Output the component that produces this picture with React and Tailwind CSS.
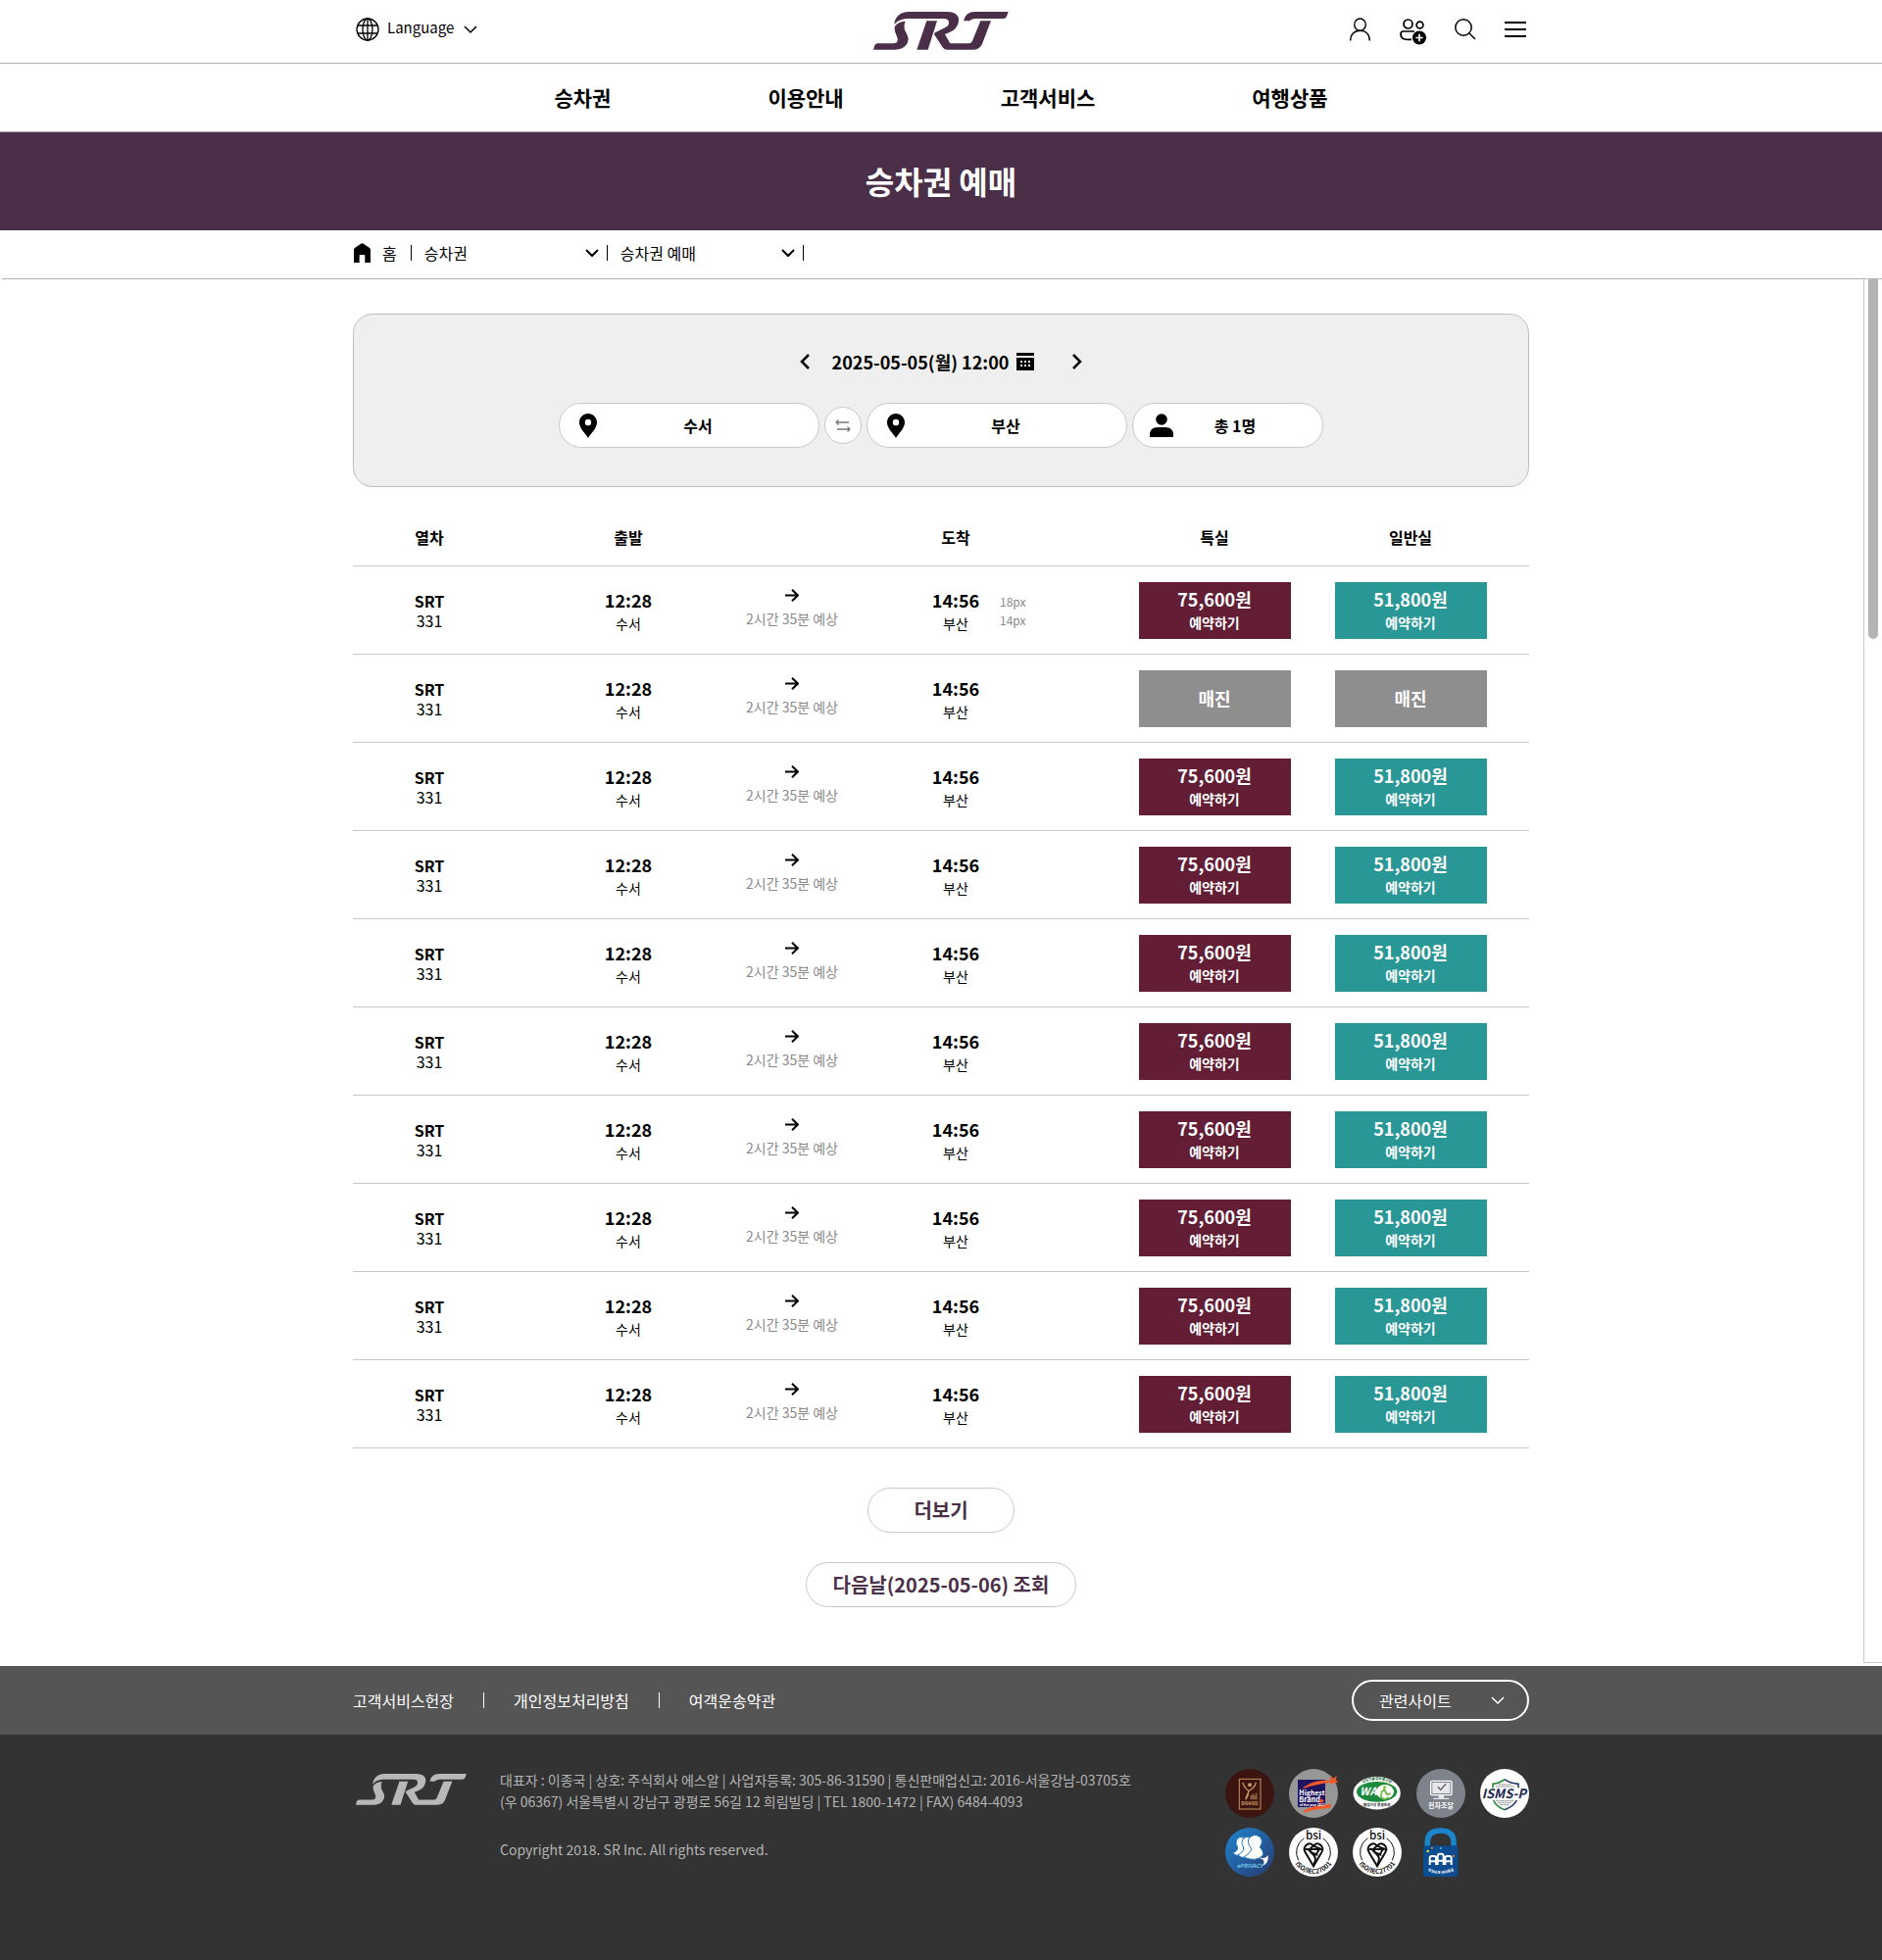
import React from "react";

const NAV = ["승차권", "이용안내", "고객서비스", "여행상품"];

const TRAINS = Array.from({ length: 10 }, (_, i) => ({
  id: i,
  number: "331",
  soldOut: i === 1,
  note: i === 0,
}));

function SrtLogo({ className }) {
  return (
    <svg viewBox="33 36 414 117" className={className} fill="currentColor" role="img" aria-label="SRT">
      <path d="M97 76C97 54 114 36 142 36H258C286 36 299 50 293 70C289 86 278 95 266 99L252 105L268 133H324Q333 133 336 125L361 64H393L366 134Q359 152 338 152H258Q249 152 245 145L219 105Q218 102 222 100L252 85Q264 80 264 69Q264 57 248 57H140C120 57 104 64 97 76Z" />
      <path d="M196 64H228L200 152H166Z" />
      <path d="M98 82Q108 66 131 65Q124 82 131 96L137 108Q144 124 133 138Q122 152 99 152H33L37 139Q39 133 46 133H92Q111 133 107 117L100 99Q97 91 98 82Z" />
      <path d="M309 64Q315 36 344 36H446L441 50Q438 57 431 57H346Q334 57 328 64Z" />
    </svg>
  );
}

function Chevron({ dir = "down", className }) {
  const d = {
    down: "M1 4L7 10L13 4",
    left: "M10 1L3 8L10 15",
    right: "M4 1L11 8L4 15",
  }[dir];
  return (
    <svg viewBox={dir === "down" ? "0 0 14 14" : "0 0 14 16"} className={className} fill="none" stroke="currentColor" aria-hidden="true">
      <path d={d} />
    </svg>
  );
}

function PinIcon() {
  return (
    <svg viewBox="0 0 18 25" className="h-[25px] w-[18px]" aria-hidden="true">
      <path fillRule="evenodd" d="M9 0C4 0 0 4 0 9C0 15 6 20 9 25C12 20 18 15 18 9C18 4 14 0 9 0ZM9 5.8A3.2 3.2 0 1 1 9 12.2A3.2 3.2 0 1 1 9 5.8Z" />
    </svg>
  );
}

function SelectBox({ label, value, className, chevron }) {
  return (
    <span className="relative flex items-center">
      <select aria-label={label} defaultValue={value} className={className}>
        <option>{value}</option>
      </select>
      <Chevron className={chevron} />
    </span>
  );
}

function Separator({ className }) {
  return <span aria-hidden="true" className={className} />;
}

function SeatButton({ soldOut, price, color }) {
  if (soldOut) {
    return (
      <button type="button" disabled className="h-[58px] w-[155px] bg-[#8e8e8e] pb-0.5 text-lg font-bold text-white">
        매진
      </button>
    );
  }
  return (
    <button type="button" className={`flex h-[58px] w-[155px] flex-col items-center justify-center text-white ${color}`}>
      <span className="text-lg leading-6 font-bold">{price}</span>
      <span className="text-sm leading-6 font-bold">예약하기</span>
    </button>
  );
}

function BsiBadge({ code, id }) {
  return (
    <svg viewBox="0 0 150 150" className="size-[50px] overflow-visible" role="img" aria-label={`bsi ${code}`}>
      <circle cx="75" cy="75" r="75" fill="#fff" />
      <path d="M46 32A52 52 0 0 0 29 100M104 32A52 52 0 0 1 121 100" fill="none" stroke="#111" strokeWidth="3" />
      <text x="75" y="36" fontSize="35" fontWeight="500" textAnchor="middle" fill="#111">bsi</text>
      <path d="M75 118L52 79Q42 64 52 54Q64 42 75 56Q86 42 98 54Q108 64 98 79Z" fill="none" stroke="#111" strokeWidth="6" />
      <path d="M50 66H100M75 56Q56 66 70 76L88 84M60 68L72 80Q88 92 75 114M75 56L94 64L84 80" fill="none" stroke="#111" strokeWidth="6" />
      <path id={id} d="M14 100A66 66 0 0 0 136 100" fill="none" />
      <text fontSize="20" fontWeight="700" fill="#111" textAnchor="middle">
        <textPath href={`#${id}`} startOffset="50%">{code}</textPath>
      </text>
    </svg>
  );
}

function Badges() {
  return (
    <div className="grid grid-cols-5 gap-x-[15px] gap-y-[10px]">
      <svg viewBox="0 0 150 150" className="size-[50px]" role="img" aria-label="BRAND">
        <circle cx="75" cy="75" r="75" fill="#3c1410" />
        <rect x="43" y="31" width="65" height="92" fill="none" stroke="#c8935c" strokeWidth="3" />
        <circle cx="75" cy="49" r="6" fill="#c8935c" />
        <path d="M53 42Q60 60 70 66Q74 78 62 94M94 42Q90 58 74 66Q66 78 62 94" fill="none" stroke="#c8935c" strokeWidth="4" />
        <path d="M76 94V81H82V76H88V82H92V74H98V94Z" fill="#8a5a38" />
        <text x="75" y="112" fontSize="15" fontWeight="700" textAnchor="middle" fill="#c8935c">BRAND</text>
      </svg>
      <svg viewBox="0 0 150 150" className="size-[50px] overflow-visible" role="img" aria-label="Highest Brand of the year">
        <circle cx="75" cy="75" r="75" fill="#979797" />
        <rect x="27" y="33" width="84" height="84" fill="#21145f" />
        <path d="M44 56Q78 32 128 35L122 23L135 29L147 20L143 33L151 42L137 42L131 50L128 42Q84 46 44 60Z" fill="#f1592a" />
        <path d="M46 127Q80 108 130 109L126 120Q84 122 46 134Z" fill="#f1592a" />
        <text x="31" y="82" fontSize="21" fontWeight="700" fill="#fff">Highest</text>
        <text x="31" y="103" fontSize="22" fontWeight="700" fill="#fff">Brand</text>
        <path d="M99 89L102 95L109 95L104 100L106 106L99 102L93 106L95 100L90 95L97 95Z" fill="#f1592a" />
        <text x="32" y="114" fontSize="10" fontWeight="700" fill="#fff">of the year 2017</text>
      </svg>
      <svg viewBox="0 0 150 150" className="size-[50px]" role="img" aria-label="WA 웹접근성">
        <ellipse cx="74" cy="74" rx="73" ry="51" fill="#fff" stroke="#222" strokeWidth="1" />
        <ellipse cx="74" cy="70" rx="62" ry="31" fill="#1b8a3c" />
        <ellipse cx="99" cy="70" rx="27" ry="22" fill="#fff" />
        <text x="22" y="82" fontSize="33" fontWeight="700" fontStyle="italic" fill="#fff">WA</text>
        <circle cx="98" cy="57" r="5" fill="#8bc53f" />
        <path d="M86 72L97 64L105 78L116 76M90 74A11 11 0 1 0 108 86" fill="none" stroke="#6db33f" strokeWidth="5" />
        <path id="wa-top" d="M20 52Q74 14 128 52" fill="none" />
        <text fontSize="11" fontWeight="700" fill="#1b6a34" textAnchor="middle">
          <textPath href="#wa-top" startOffset="50%">과학기술정보통신부</textPath>
        </text>
        <text x="74" y="115" fontSize="11" fontWeight="700" textAnchor="middle" fill="#222">웹접근성 품질인증</text>
      </svg>
      <svg viewBox="0 0 150 150" className="size-[50px]" role="img" aria-label="전자조달">
        <circle cx="75" cy="75" r="75" fill="#7e828b" />
        <rect x="44" y="37" width="64" height="43" rx="4" fill="none" stroke="#fff" strokeWidth="4" />
        <rect x="49" y="42" width="54" height="33" fill="#e6e7ea" />
        <path d="M66 55L74 64L90 46" fill="none" stroke="#4b5160" strokeWidth="4" />
        <path d="M68 80V89H52V93H100V89H84V80" fill="#e6e7ea" />
        <text x="75" y="121" fontSize="21" fontWeight="700" textAnchor="middle" fill="#fff">전자조달</text>
      </svg>
      <svg viewBox="0 0 150 150" className="size-[50px]" role="img" aria-label="ISMS-P">
        <circle cx="75" cy="75" r="75" fill="#fff" />
        <path d="M39 58V46Q60 44 75 32" fill="none" stroke="#2f8a3e" strokeWidth="5" />
        <path d="M75 32Q90 44 117 46V58" fill="none" stroke="#22386f" strokeWidth="5" />
        <path d="M41 96Q50 116 75 125" fill="none" stroke="#2f8a3e" strokeWidth="5" />
        <path d="M75 125Q104 114 112 96" fill="none" stroke="#22386f" strokeWidth="5" />
        <path d="M56 48H96M48 54H106M48 98H102M54 104H96M60 110H90" stroke="#888" strokeWidth="3" strokeDasharray="4 1" />
        <text x="73" y="89" fontSize="39" fontWeight="700" fontStyle="italic" textAnchor="middle" fill="#1b2750">ISMS-P</text>
      </svg>
      <svg viewBox="0 0 150 150" className="size-[50px]" role="img" aria-label="ePRIVACY">
        <defs>
          <linearGradient id="privacy" x1="0" y1="0" x2="1" y2="1">
            <stop offset="0" stopColor="#1f86cf" />
            <stop offset="1" stopColor="#27386f" />
          </linearGradient>
        </defs>
        <circle cx="75" cy="75" r="75" fill="url(#privacy)" />
        <g fill="#fff" stroke="#2276b8" strokeWidth="3">
          <path d="M22 78Q40 70 38 60Q28 46 38 32Q48 24 58 32L66 88Q40 90 22 78Z" />
          <path d="M38 84Q58 74 56 60Q46 46 56 32Q66 24 76 32L84 92Q56 98 38 84Z" />
          <path d="M56 90Q78 78 80 64Q64 46 74 31Q88 16 106 28Q118 42 106 60Q120 74 114 86Q92 106 56 90Z" />
        </g>
        <path d="M100 90Q122 98 131 84Q134 108 114 118Q122 106 116 98" fill="#fff" />
        <text x="75" y="123" fontSize="17" fontWeight="700" fontStyle="italic" textAnchor="middle" fill="#6fc5ea">ePRIVACY</text>
      </svg>
      <BsiBadge code="ISO/IEC27001" id="bsi-27001" />
      <BsiBadge code="ISO/IEC27701" id="bsi-27701" />
      <svg viewBox="0 0 150 150" className="size-[50px]" role="img" aria-label="AAA 정보보호">
        <path d="M34 60V44Q34 9 74 9Q114 9 114 44V60" fill="none" stroke="#1b84cb" strokeWidth="17" />
        <rect x="21" y="55" width="106" height="95" rx="7" fill="#0b4b90" />
        <circle cx="35" cy="72" r="4" fill="#d5df30" />
        <circle cx="48" cy="62" r="3" fill="#ef8a2b" />
        <circle cx="74" cy="63" r="3" fill="#58c3ef" />
        <circle cx="114" cy="86" r="3" fill="#ef8a2b" />
        <path d="M41 114V94Q41 87 47 87H54Q60 87 60 94V114M41 103H60M65 114V88Q65 80 71 80H77Q83 80 83 88V114M65 101H83M88 114V94Q88 87 94 87H101Q107 87 107 94V114M88 103H107" fill="none" stroke="#fff" strokeWidth="6" />
        <path id="lock-base" d="M28 128Q74 154 122 128" fill="none" />
        <text fontSize="11" fontWeight="700" fill="#fff" textAnchor="middle">
          <textPath href="#lock-base" startOffset="50%">정보보호 관리등급</textPath>
        </text>
      </svg>
    </div>
  );
}

function TopBar() {
  return (
    <div className="border-b border-[#b4b4b4]">
      <div className="mx-auto grid h-16 max-w-[1200px] grid-cols-3 items-center">
        <div className="flex items-center gap-2 pb-1 pl-[3px]">
          <svg viewBox="0 0 24 24" className="size-6" fill="none" stroke="currentColor" strokeWidth="1.3" aria-hidden="true">
            <circle cx="12" cy="12" r="11" />
            <ellipse cx="12" cy="12" rx="5" ry="11" />
            <path d="M12 1V23M2 8H22M2 16H22" />
          </svg>
          <SelectBox
            label="Language"
            value="Language"
            className="w-[92px] appearance-none bg-transparent pb-[3px] text-[15px]"
            chevron="pointer-events-none absolute right-0 size-3.5 stroke-[1.5]"
          />
        </div>
        <a href="#home" className="justify-self-center pb-0.5 text-[#4b2f48]">
          <SrtLogo className="h-[39px] w-[138px]" />
        </a>
        <div className="flex items-center gap-[29px] justify-self-end pr-[3px] pb-1">
          <button type="button" aria-label="로그인">
            <svg viewBox="0 0 22 24" className="h-6 w-[22px]" fill="none" stroke="currentColor" strokeWidth="1.4">
              <ellipse cx="11.500" cy="7.200" rx="5.800" ry="6.200" />
              <path d="M1.700 23.500C1.700 17 5.500 13.200 11.500 13.200S21.300 17 21.300 23.500" />
            </svg>
          </button>
          <button type="button" aria-label="회원가입">
            <svg viewBox="0 0 28 28" className="-mb-1 size-7" fill="none" stroke="currentColor" strokeWidth="1.7">
              <circle cx="9.500" cy="6.500" r="4.500" />
              <circle cx="21.500" cy="7.500" r="3.400" />
              <path d="M16 14H4.500Q2 14 2 17C2 21 5 23 13 22.300M19 14H23" />
              <circle cx="21.500" cy="20" r="7.500" fill="#fff" stroke="none" />
              <circle cx="21" cy="20.500" r="7" fill="#000" stroke="none" />
              <path d="M21 16.800V24.200M17.300 20.500H24.700" stroke="#fff" />
            </svg>
          </button>
          <button type="button" aria-label="검색">
            <svg viewBox="0 0 22 22" className="size-[22px]" fill="none" stroke="currentColor" strokeWidth="1.5">
              <circle cx="9" cy="9" r="8.200" />
              <path d="M15 15L21 21" />
            </svg>
          </button>
          <button type="button" aria-label="전체메뉴">
            <svg viewBox="0 0 22 22" className="size-[22px]" stroke="currentColor" strokeWidth="2">
              <path d="M0 4H22M0 11H22M0 18H22" />
            </svg>
          </button>
        </div>
      </div>
    </div>
  );
}

function SearchPanel() {
  const pill = "flex h-[46px] items-center rounded-full border border-[#c8c8c8] bg-white text-base font-bold";
  return (
    <section className="mx-auto max-w-[1200px] rounded-[20px] border border-[#bebebe] bg-[#efefef] pt-8 pb-[39px]">
      <div className="flex h-8 items-center justify-center">
        <button type="button" aria-label="이전 날짜">
          <Chevron dir="left" className="h-4 w-3.5 stroke-[2.5]" />
        </button>
        <button type="button" className="mr-9 ml-5 flex items-center gap-2 text-lg font-bold">
          2025-05-05(월) 12:00
          <svg viewBox="0 0 18 18" className="size-[18px]" aria-hidden="true">
            <path d="M0 0H18V3H0Z" />
            <path fillRule="evenodd" d="M0 5H18V18H0ZM4 8V10H6V8ZM8 8V10H10V8ZM12 8V10H14V8ZM4 12V14H6V12ZM8 12V14H10V12ZM12 12V14H14V12Z" />
          </svg>
        </button>
        <button type="button" aria-label="다음 날짜">
          <Chevron dir="right" className="h-4 w-3.5 stroke-[2.5]" />
        </button>
      </div>
      <div className="mt-[26px] flex items-center justify-center gap-[5px]">
        <button type="button" className={`${pill} w-[266px] px-5`}>
          <PinIcon />
          <span className="flex-1">수서</span>
        </button>
        <button type="button" aria-label="출발역 도착역 바꾸기" className="grid size-[38px] place-items-center rounded-full border border-[#c8c8c8] bg-white text-[#777]">
          <svg viewBox="0 0 16 13" className="h-[13px] w-4" fill="none" stroke="currentColor" strokeWidth="1.3">
            <path d="M14 3H1M3.500 .5L1 3L3.500 5.500M2 10H15M12.500 7.500L15 10L12.500 12.500" />
          </svg>
        </button>
        <button type="button" className={`${pill} w-[266px] px-5`}>
          <PinIcon />
          <span className="flex-1">부산</span>
        </button>
        <button type="button" className={`${pill} w-[195px] pr-5 pl-[17px]`}>
          <svg viewBox="0 0 24 24" className="size-6" aria-hidden="true">
            <circle cx="12" cy="6" r="5.800" />
            <path d="M0 24V22Q0 14 8 14H16Q24 14 24 22V24Z" />
          </svg>
          <span className="flex-1 pr-1.5">총 1명</span>
        </button>
      </div>
    </section>
  );
}

function TrainTable() {
  return (
    <table className="mx-auto mt-6 w-full max-w-[1200px] table-fixed text-center whitespace-nowrap">
      <colgroup>
        <col className="w-[156px]" />
        <col className="w-[230px]" />
        <col className="w-[124px]" />
        <col className="w-[210px]" />
        <col className="w-[59px]" />
        <col className="w-[200px]" />
        <col className="w-[200px]" />
        <col />
      </colgroup>
      <thead>
        <tr className="h-14 border-b border-[#c8c8c8] text-base font-bold *:pb-0.5">
          <th>열차</th>
          <th className="pl-5">출발</th>
          <td />
          <th>도착</th>
          <td />
          <th>특실</th>
          <th>일반실</th>
          <td />
        </tr>
      </thead>
      <tbody>
        {TRAINS.map((t) => (
          <tr key={t.id} className="h-[90px] border-b border-[#c8c8c8]">
            <td className="pt-0.5">
              <div className="text-base leading-5 font-bold">SRT</div>
              <div className="text-base leading-5">{t.number}</div>
            </td>
            <td className="pt-1 pl-5">
              <div className="text-lg leading-6 font-bold">12:28</div>
              <div className="text-sm leading-6">수서</div>
            </td>
            <td>
              <svg viewBox="0 0 14 13" className="mx-auto mb-[5px] h-[13px] w-3.5" fill="none" stroke="currentColor" strokeWidth="2" aria-hidden="true">
                <path d="M0 6.500H13M7 .7L13 6.500L7 12.300" />
              </svg>
              <div className="text-sm leading-6 text-[#8a8a8a]">2시간 35분 예상</div>
            </td>
            <td className="pt-1">
              <div className="relative">
                <div className="text-lg leading-6 font-bold">14:56</div>
                <div className="text-sm leading-6">부산</div>
                {t.note && (
                  <div className="absolute top-1 left-[150px] text-left text-xs leading-[19px] text-[#8a8a8a]">
                    18px
                    <br />
                    14px
                  </div>
                )}
              </div>
            </td>
            <td />
            <td className="pt-0.5">
              <div className="flex justify-center">
                <SeatButton soldOut={t.soldOut} price="75,600원" color="bg-[#631e36]" />
              </div>
            </td>
            <td className="pt-0.5">
              <div className="flex justify-center">
                <SeatButton soldOut={t.soldOut} price="51,800원" color="bg-[#2a9797]" />
              </div>
            </td>
            <td />
          </tr>
        ))}
      </tbody>
    </table>
  );
}

function Footer() {
  return (
    <footer className="flex flex-1 flex-col text-white">
      <div className="bg-[#555]">
        <div className="mx-auto flex h-[70px] max-w-[1200px] items-center justify-between">
          <div className="flex items-center gap-[30px] text-base">
            <a href="#charter">고객서비스헌장</a>
            <Separator className="h-4 w-px bg-white" />
            <a href="#privacy-policy">개인정보처리방침</a>
            <Separator className="h-4 w-px bg-white" />
            <a href="#terms">여객운송약관</a>
          </div>
          <SelectBox
            label="관련사이트"
            value="관련사이트"
            className="h-[42px] w-[181px] appearance-none rounded-full border-2 border-white bg-transparent px-[26px] text-base"
            chevron="pointer-events-none absolute right-[25px] size-3.5 stroke-[1.5]"
          />
        </div>
      </div>
      <div className="flex-1 bg-[#333]">
        <div className="mx-auto flex max-w-[1200px] items-start justify-between pt-[35px]">
          <div className="flex items-start gap-[33px] pl-0.5">
            <SrtLogo className="mt-[5px] h-8 w-[115px] text-[#b8b8b8]" />
            <div className="text-sm leading-[22px] text-[#b4b4b4]">
              <p>대표자 : 이종국 | 상호: 주식회사 에스알 | 사업자등록: 305-86-31590 | 통신판매업신고: 2016-서울강남-03705호</p>
              <p>(우 06367) 서울특별시 강남구 광평로 56길 12 희림빌딩 | TEL 1800-1472 | FAX) 6484-4093</p>
              <p className="mt-[27px]">Copyright 2018. SR Inc. All rights reserved.</p>
            </div>
          </div>
          <Badges />
        </div>
      </div>
    </footer>
  );
}

export default function App() {
  return (
    <div className="flex min-h-screen flex-col bg-white text-black [font-family:'Noto_Sans_CJK_KR',sans-serif]">
      <header>
        <TopBar />
        <nav className="flex h-[70px] items-center justify-center gap-40 border-b border-[#b4aaaa] text-[21px] font-bold">
          {NAV.map((item) => (
            <a key={item} href={`#${item}`}>{item}</a>
          ))}
        </nav>
      </header>
      <div className="flex h-[100px] items-center justify-center bg-[#4b2f48] pb-[3px]">
        <h1 className="text-[32px] font-bold text-white">승차권 예매</h1>
      </div>
      <div className="ml-0.5 border-b border-[#b4b4b4]">
        <div className="mx-auto flex h-[49px] max-w-[1200px] items-center pr-0.5 pb-[3px] text-base">
          <a href="#home" className="flex items-center gap-3">
            <svg viewBox="0 0 18 20" className="h-5 w-[17px]" preserveAspectRatio="none" aria-hidden="true">
              <path d="M0 7Q0 6 1 5L8 .5Q9 0 10 .5L17 5Q18 6 18 7V20H12V13Q12 12 11 12H7Q6 12 6 13V20H0Z" />
            </svg>
            홈
          </a>
          <Separator className="ml-3.5 h-4 w-px bg-black" />
          <SelectBox
            label="메뉴"
            value="승차권"
            className="w-[199px] appearance-none bg-transparent pl-[13px]"
            chevron="pointer-events-none absolute right-2 size-3.5 stroke-2"
          />
          <Separator className="h-4 w-px bg-black" />
          <SelectBox
            label="하위 메뉴"
            value="승차권 예매"
            className="w-[199px] appearance-none bg-transparent pl-[13px]"
            chevron="pointer-events-none absolute right-2 size-3.5 stroke-2"
          />
          <Separator className="h-4 w-px bg-black" />
        </div>
      </div>
      <main className="relative pt-[35px] pb-[60px]">
        <SearchPanel />
        <TrainTable />
        <div className="mt-10 flex flex-col items-center gap-[30px] text-xl font-bold text-[#4b2f48]">
          <button type="button" className="h-[46px] w-[150px] rounded-full border border-[#c8c8c8]">더보기</button>
          <button type="button" className="h-[46px] w-[276px] rounded-full border border-[#c8c8c8]">다음날(2025-05-06) 조회</button>
        </div>
        <div aria-hidden="true" className="absolute top-0 right-0 bottom-[3px] w-[19px] border-b border-l border-[#c8c8c8]">
          <div className="ml-1 h-[367px] w-2.5 rounded-b-full bg-[#b4b4b4]" />
        </div>
      </main>
      <Footer />
    </div>
  );
}
